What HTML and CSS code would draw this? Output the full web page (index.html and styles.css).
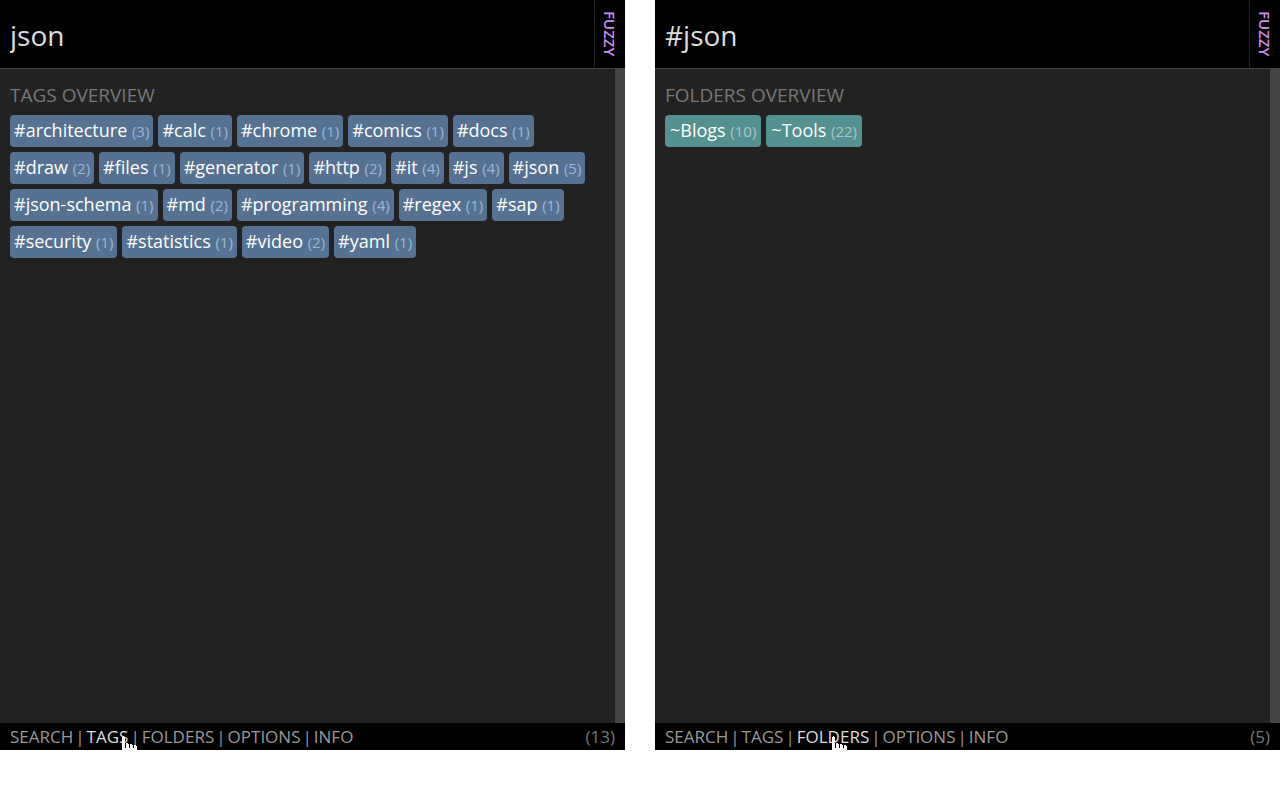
FILE: index.html
```html
<!DOCTYPE html>
<html lang="en">

<head>
    <meta charset="UTF-8">
    <meta name="viewport" content="width=device-width, initial-scale=1.0">
    <title>Bookmark search</title>
    <link rel="stylesheet" href="styles.css">
</head>

<body>

    <div class="popups">
        <section class="popup">
            <header class="search">
                <input class="search-input" type="text" value="json" aria-label="Search" spellcheck="false">
                <button class="search-mode" type="button">FUZZY</button>
            </header>

            <main class="overview">
                <h1>TAGS OVERVIEW</h1>
                <div class="chips">
                    <a class="chip" href="#architecture">#architecture <small>(3)</small></a>
                    <a class="chip" href="#calc">#calc <small>(1)</small></a>
                    <a class="chip" href="#chrome">#chrome <small>(1)</small></a>
                    <a class="chip" href="#comics">#comics <small>(1)</small></a>
                    <a class="chip" href="#docs">#docs <small>(1)</small></a>
                    <a class="chip" href="#draw">#draw <small>(2)</small></a>
                    <a class="chip" href="#files">#files <small>(1)</small></a>
                    <a class="chip" href="#generator">#generator <small>(1)</small></a>
                    <a class="chip" href="#http">#http <small>(2)</small></a>
                    <a class="chip" href="#it">#it <small>(4)</small></a>
                    <a class="chip" href="#js">#js <small>(4)</small></a>
                    <a class="chip" href="#json">#json <small>(5)</small></a>
                    <a class="chip" href="#json-schema">#json-schema <small>(1)</small></a>
                    <a class="chip" href="#md">#md <small>(2)</small></a>
                    <a class="chip" href="#programming">#programming <small>(4)</small></a>
                    <a class="chip" href="#regex">#regex <small>(1)</small></a>
                    <a class="chip" href="#sap">#sap <small>(1)</small></a>
                    <a class="chip" href="#security">#security <small>(1)</small></a>
                    <a class="chip" href="#statistics">#statistics <small>(1)</small></a>
                    <a class="chip" href="#video">#video <small>(2)</small></a>
                    <a class="chip" href="#yaml">#yaml <small>(1)</small></a>
                </div>
            </main>

            <footer class="footer">
                <nav>
                    <a href="#search">SEARCH</a>
                    <span>|</span>
                    <a class="active" href="#tags">TAGS<svg class="pointer" viewBox="0 0 16 14" aria-hidden="true"><path d="M0 1h1v-1h1v1h1v6h3v1h4v1h4v1h1v4h-15z" fill="#fff"/><path d="M3 7h1v5h-1zM7 8h1v4h-1zM11 9h1v3h-1z" fill="#000"/></svg></a>
                    <span>|</span>
                    <a href="#folders">FOLDERS</a>
                    <span>|</span>
                    <a href="#options">OPTIONS</a>
                    <span>|</span>
                    <a href="#info">INFO</a>
                </nav>
                <span class="count">(13)</span>
            </footer>
        </section>

        <section class="popup">
            <header class="search">
                <input class="search-input" type="text" value="#json" aria-label="Search" spellcheck="false">
                <button class="search-mode" type="button">FUZZY</button>
            </header>

            <main class="overview">
                <h1>FOLDERS OVERVIEW</h1>
                <div class="chips">
                    <a class="chip folder" href="#blogs">~Blogs <small>(10)</small></a>
                    <a class="chip folder" href="#tools">~Tools <small>(22)</small></a>
                </div>
            </main>

            <footer class="footer">
                <nav>
                    <a href="#search">SEARCH</a>
                    <span>|</span>
                    <a href="#tags">TAGS</a>
                    <span>|</span>
                    <a class="active" href="#folders">FOLDERS<svg class="pointer" viewBox="0 0 16 14" aria-hidden="true"><path d="M0 1h1v-1h1v1h1v6h3v1h4v1h4v1h1v4h-15z" fill="#fff"/><path d="M3 7h1v5h-1zM7 8h1v4h-1zM11 9h1v3h-1z" fill="#000"/></svg></a>
                    <span>|</span>
                    <a href="#options">OPTIONS</a>
                    <span>|</span>
                    <a href="#info">INFO</a>
                </nav>
                <span class="count">(5)</span>
            </footer>
        </section>
    </div>

</body>

</html>
```
FILE: styles.css
```css
body {
    margin: 0;
    background-color: #fff;
    font-family: "Open Sans", "Noto Sans", sans-serif;
}

a {
    color: inherit;
    text-decoration: none;
}

.popups {
    display: grid;
    grid-template-columns: 1fr 1fr;
    gap: 30px;
    height: calc(100vh - 50px);
}

.popup {
    display: flex;
    flex-direction: column;
    min-width: 0;
    overflow: hidden;
    background-color: #222;
}

.search {
    display: flex;
    height: 68px;
    background-color: #000;
    border-bottom: 1px solid #444;
}

.search-input {
    flex: 1;
    min-width: 0;
    padding: 2px 10px 0;
    border: none;
    outline: none;
    background: none;
    color: #ddd;
    font-family: inherit;
    font-size: 28px;
}

.search-mode {
    width: 31px;
    padding: 0;
    border: none;
    border-left: 1px solid #222;
    background: none;
    color: #d08ff0;
    font-family: inherit;
    font-size: 15px;
    font-weight: 600;
    writing-mode: vertical-rl;
    cursor: pointer;
}

.overview {
    flex: 1;
    padding: 12px 10px;
    border-right: 10px solid #444;
}

h1 {
    margin: 0 0 6px;
    color: #777;
    font-size: 19px;
    font-weight: normal;
    line-height: 28px;
}

.chips {
    display: flex;
    flex-wrap: wrap;
    gap: 5px;
}

.chip {
    padding: 0 4px 2px;
    border-radius: 4px;
    background-color: #567293;
    color: #fff;
    font-size: 18px;
    line-height: 30px;
}

.chip small {
    color: #9ab7d3;
    font-size: 15px;
    line-height: 1;
}

.chip.folder {
    padding: 0 5px 2px;
    background-color: #569191;
}

.chip.folder small {
    color: #a9c6cc;
}

.footer {
    display: flex;
    justify-content: space-between;
    padding: 0 10px;
    background-color: #000;
    color: #999;
    font-size: 17px;
    line-height: 27px;
}

.footer nav {
    display: flex;
    gap: 2px;
}

.footer .active {
    position: relative;
    color: #ddd;
}

.count {
    color: #777;
}

/* hand over the hovered link */
.pointer {
    position: absolute;
    top: 13px;
    left: 35px;
    width: 16px;
    height: 14px;
}
```
